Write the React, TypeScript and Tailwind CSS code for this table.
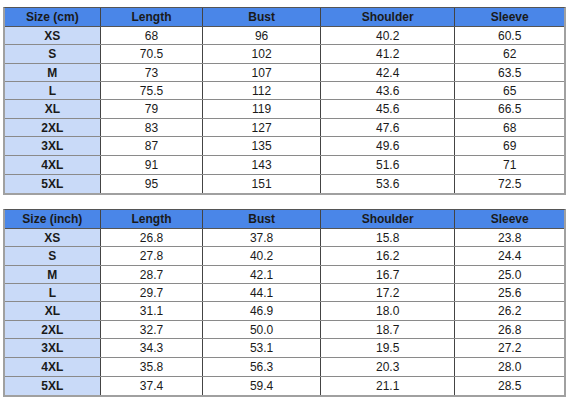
import React from "react"

const COLS = ["w-[96px]", "w-[103px]", "w-[118px]", "w-[135px]", "w-[109px]"]
const ROW_H = ["h-[18px]", "h-[19px]", "h-[18px]", "h-[18px]", "h-[19px]", "h-[18px]", "h-[19px]", "h-[19px]", "h-[18px]"]

const SIZES = ["XS", "S", "M", "L", "XL", "2XL", "3XL", "4XL", "5XL"]

const CM: string[][] = [
  ["68", "96", "40.2", "60.5"],
  ["70.5", "102", "41.2", "62"],
  ["73", "107", "42.4", "63.5"],
  ["75.5", "112", "43.6", "65"],
  ["79", "119", "45.6", "66.5"],
  ["83", "127", "47.6", "68"],
  ["87", "135", "49.6", "69"],
  ["91", "143", "51.6", "71"],
  ["95", "151", "53.6", "72.5"],
]

const INCH: string[][] = [
  ["26.8", "37.8", "15.8", "23.8"],
  ["27.8", "40.2", "16.2", "24.4"],
  ["28.7", "42.1", "16.7", "25.0"],
  ["29.7", "44.1", "17.2", "25.6"],
  ["31.1", "46.9", "18.0", "26.2"],
  ["32.7", "50.0", "18.7", "26.8"],
  ["34.3", "53.1", "19.5", "27.2"],
  ["35.8", "56.3", "20.3", "28.0"],
  ["37.4", "59.4", "21.1", "28.5"],
]

function SizeTable({ unit, rows }: { unit: string; rows: string[][] }) {
  const head = [`Size (${unit})`, "Length", "Bust", "Shoulder", "Sleeve"]
  return (
    <div className="w-[563px] border-t border-[#555] border-l-2 border-l-[#a0a0a0] border-r-2 border-r-[#a0a0a0] border-b-2 border-b-[#a0a0a0]">
      {/* header */}
      <div className="flex h-[19px] bg-[#4a86e8] border-b border-[#555]">
        {head.map((h, i) => (
          <div
            key={h}
            className={`${COLS[i]} flex items-center justify-center font-bold ${i < 4 ? "border-r border-[#444]" : ""}`}
          >
            {h}
          </div>
        ))}
      </div>
      {rows.map((r, ri) => (
        <div
          key={ri}
          className={`flex ${ROW_H[ri]} ${ri < rows.length - 1 ? "border-b border-[#8a8a8a]" : ""}`}
        >
          <div className={`${COLS[0]} flex items-center justify-center font-bold bg-[#c9daf8] border-r border-[#444]`}>
            {SIZES[ri]}
          </div>
          {r.map((v, ci) => (
            <div
              key={ci}
              className={`${COLS[ci + 1]} flex items-center justify-center bg-white ${ci < 3 ? "border-r border-[#444]" : ""}`}
            >
              {v}
            </div>
          ))}
        </div>
      ))}
    </div>
  )
}

export default function App() {
  return (
    <div className="w-[573px] h-[400px] bg-white pt-[7px] pl-[3px] flex flex-col gap-[14px] text-[12px] text-[#1a1a1a] font-['Liberation_Sans',Arial,sans-serif] leading-none">
      <SizeTable unit="cm" rows={CM} />
      <SizeTable unit="inch" rows={INCH} />
    </div>
  )
}
